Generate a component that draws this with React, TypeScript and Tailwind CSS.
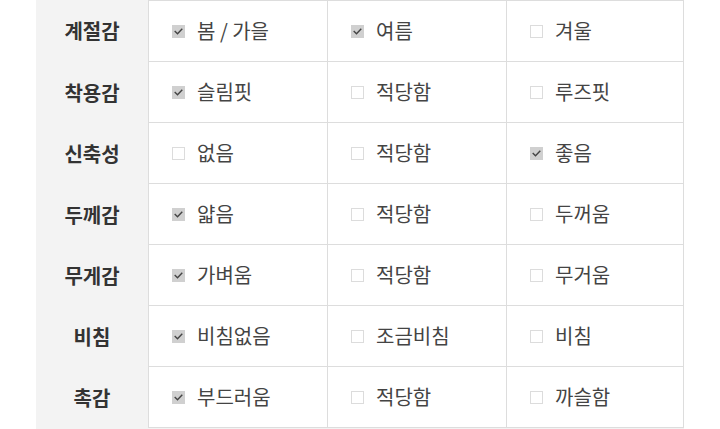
import React from 'react';

type Option = { label: string; checked: boolean };
type Row = { title: string; options: Option[] };

const rows: Row[] = [
  { title: '계절감', options: [{ label: '봄 / 가을', checked: true }, { label: '여름', checked: true }, { label: '겨울', checked: false }] },
  { title: '착용감', options: [{ label: '슬림핏', checked: true }, { label: '적당함', checked: false }, { label: '루즈핏', checked: false }] },
  { title: '신축성', options: [{ label: '없음', checked: false }, { label: '적당함', checked: false }, { label: '좋음', checked: true }] },
  { title: '두께감', options: [{ label: '얇음', checked: true }, { label: '적당함', checked: false }, { label: '두꺼움', checked: false }] },
  { title: '무게감', options: [{ label: '가벼움', checked: true }, { label: '적당함', checked: false }, { label: '무거움', checked: false }] },
  { title: '비침', options: [{ label: '비침없음', checked: true }, { label: '조금비침', checked: false }, { label: '비침', checked: false }] },
  { title: '촉감', options: [{ label: '부드러움', checked: true }, { label: '적당함', checked: false }, { label: '까슬함', checked: false }] },
];

const widths = ['w-[179px]', 'w-[179px]', 'w-[178px] border-r'];

function Checkbox({ checked }: { checked: boolean }) {
  if (checked) {
    return (
      <span className="flex h-[13px] w-[13px] shrink-0 items-center justify-center bg-[#d0d0d0]">
        <svg width="9" height="9" viewBox="0 0 9 9" fill="none">
          <polyline points="1.2,4.6 3.5,6.8 7.8,2.2" stroke="#444" strokeWidth="1.4" strokeLinecap="square" />
        </svg>
      </span>
    );
  }
  return <span className="block h-[13px] w-[13px] shrink-0 border border-[#dcdcdc] bg-white" />;
}

export default function App() {
  return (
    <div className="flex w-[720px] justify-center bg-white" style={{ fontFamily: '"Noto Sans CJK KR", "Noto Sans", sans-serif' }}>
      <div className="flex flex-col bg-[#f3f3f3]">
        {rows.map((row, i) => (
          <div key={row.title} className={`flex ${i === 0 ? 'h-[62px]' : 'h-[61px]'}`}>
            <div className="flex w-[112px] items-center justify-center text-[20px] font-bold text-[#333]">
              {row.title}
            </div>
            {row.options.map((opt, j) => (
              <div
                key={j}
                className={`flex items-center gap-[12px] border-b border-l border-[#dddddd] bg-white pl-[23px] text-[20px] text-[#444] ${widths[j]} ${i === 0 ? 'border-t' : ''}`}
              >
                <Checkbox checked={opt.checked} />
                <span>{opt.label}</span>
              </div>
            ))}
          </div>
        ))}
        <div className="h-px" />
      </div>
    </div>
  );
}
